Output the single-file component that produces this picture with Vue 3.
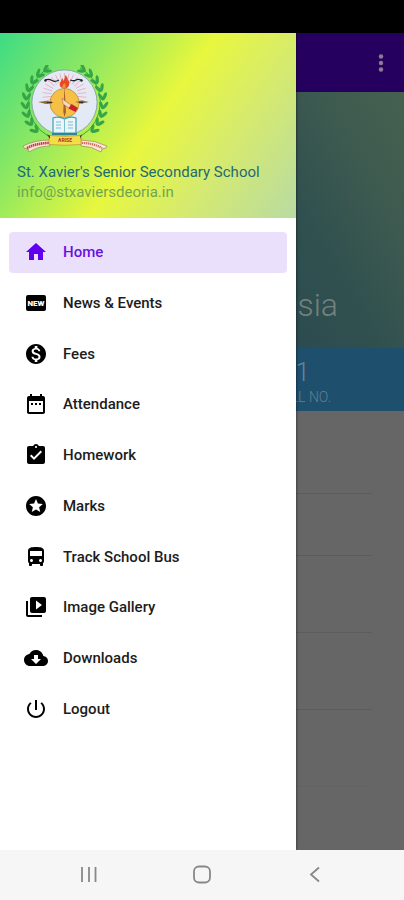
<script setup>
const items = [
  { label: 'Home', active: true, d: 'M10 20v-6h4v6h5v-8h3L12 3 2 12h3v8z' },
  { label: 'News & Events', badge: 'NEW' },
  { label: 'Fees', d: 'M12 2C6.48 2 2 6.48 2 12s4.48 10 10 10 10-4.48 10-10S17.52 2 12 2zm1.41 16.09V20h-2.67v-1.93c-1.71-.36-3.16-1.46-3.27-3.4h1.96c.1 1.05.82 1.87 2.65 1.87 1.96 0 2.4-.98 2.4-1.59 0-.83-.44-1.61-2.67-2.14-2.48-.6-4.18-1.62-4.18-3.67 0-1.72 1.39-2.84 3.11-3.21V4h2.67v1.95c1.86.45 2.79 1.86 2.85 3.39H14.3c-.05-1.11-.64-1.87-2.22-1.87-1.5 0-2.4.68-2.4 1.64 0 .84.65 1.39 2.67 1.91s4.18 1.39 4.18 3.91c-.01 1.83-1.38 2.83-3.12 3.16z' },
  { label: 'Attendance', d: 'M9 11H7v2h2v-2zm4 0h-2v2h2v-2zm4 0h-2v2h2v-2zm2-7h-1V2h-2v2H8V2H6v2H5c-1.11 0-1.99.9-1.99 2L3 20c0 1.1.89 2 2 2h14c1.1 0 2-.9 2-2V6c0-1.1-.9-2-2-2zm0 16H5V9h14v11z' },
  { label: 'Homework', d: 'M19 3h-4.18C14.4 1.84 13.3 1 12 1c-1.3 0-2.4.84-2.82 2H5c-1.1 0-2 .9-2 2v14c0 1.1.9 2 2 2h14c1.1 0 2-.9 2-2V5c0-1.1-.9-2-2-2zm-7 0c.55 0 1 .45 1 1s-.45 1-1 1-1-.45-1-1 .45-1 1-1zm-2 14l-4-4 1.41-1.41L10 14.17l6.59-6.59L18 9l-8 8z' },
  { label: 'Marks', d: 'M11.99 2C6.47 2 2 6.48 2 12s4.47 10 9.99 10C17.52 22 22 17.52 22 12S17.52 2 11.99 2zm4.24 16L12 15.45 7.77 18l1.12-4.81-3.73-3.23 4.92-.42L12 5l1.92 4.53 4.92.42-3.73 3.23L16.23 18z' },
  { label: 'Track School Bus', d: 'M4 16c0 .88.39 1.67 1 2.22V20c0 .55.45 1 1 1h1c.55 0 1-.45 1-1v-1h8v1c0 .55.45 1 1 1h1c.55 0 1-.45 1-1v-1.78c.61-.55 1-1.34 1-2.22V6c0-3.5-3.58-4-8-4s-8 .5-8 4v10zm3.5 1c-.83 0-1.5-.67-1.5-1.5S6.67 14 7.5 14s1.5.67 1.5 1.5S8.33 17 7.5 17zm9 0c-.83 0-1.5-.67-1.5-1.5s.67-1.5 1.5-1.5 1.5.67 1.5 1.5-.67 1.5-1.5 1.5zm1.5-6H6V6h12v5z' },
  { label: 'Image Gallery', d: 'M4 6H2v14c0 1.1.9 2 2 2h14v-2H4V6zm16-4H8c-1.1 0-2 .9-2 2v12c0 1.1.9 2 2 2h12c1.1 0 2-.9 2-2V4c0-1.1-.9-2-2-2zm-8 12.5v-9l6 4.5-6 4.5z' },
  { label: 'Downloads', d: 'M19.35 10.04C18.67 6.59 15.64 4 12 4 9.11 4 6.6 5.64 5.35 8.04 2.34 8.36 0 10.91 0 14c0 3.31 2.69 6 6 6h13c2.76 0 5-2.24 5-5 0-2.64-2.05-4.78-4.65-4.96zM17 13l-5 5-5-5h3V9h4v4h3z' },
  { label: 'Logout', d: 'M13 3h-2v10h2V3zm4.83 2.17l-1.42 1.42C17.99 7.86 19 9.81 19 12c0 3.87-3.13 7-7 7s-7-3.13-7-7c0-2.19 1.01-4.14 2.58-5.42L6.17 5.17C4.23 6.82 3 9.26 3 12c0 4.97 4.03 9 9 9s9-4.03 9-9c0-2.74-1.23-5.18-3.17-6.83z' }
]

// Laurel leaves, in pairs along each side of the crest (degrees clockwise from the top)
const leaves = []
for (let a = 27; a <= 131; a += 13) {
  for (const side of [-1, 1]) {
    for (const [r, tilt] of [[41, 32], [37, -24]]) {
      const t = (a * Math.PI) / 180
      leaves.push({
        x: 49.5 + side * Math.sin(t) * r,
        y: 44 - Math.cos(t) * r,
        rot: side * (a + 90 + tilt)
      })
    }
  }
}

// Rays of the torch flame
const rays = Array.from({ length: 19 }, (_, i) => -108 + i * 12)
</script>

<template>
  <div class="screen">
    <div class="status-bar"></div>

    <div class="body">
      <aside class="drawer">
        <header class="profile">
          <svg class="crest" viewBox="2 5 98 90" role="img" aria-label="School crest">
            <path d="M33 76A39 39 0 0 1 34 8M66 76A39 39 0 0 0 65 8" fill="none" stroke="#39a845" stroke-width="1" />
            <ellipse
              v-for="(l, i) in leaves"
              :key="i"
              rx="1.6"
              ry="4.2"
              fill="#35a548"
              :transform="`translate(${l.x} ${l.y}) rotate(${l.rot})`"
            />
            <circle cx="49.5" cy="42.5" r="32.6" fill="#e3eaf6" stroke="#7d9a9a" stroke-width=".8" />
            <g stroke="#eba9b4" stroke-width=".8">
              <path v-for="r in rays" :key="r" d="M0 -13V-22" :transform="`translate(49.5 35) rotate(${r})`" />
            </g>
            <circle cx="49.5" cy="43" r="14.6" fill="#f6bf45" stroke="#a98738" stroke-width=".7" />
            <path d="M30 20q4-1.500 7 .5t7-.5M55 20q4 1.500 6 0t6 .5" fill="none" stroke="#24242c" stroke-width="1.300" />
            <circle cx="30.500" cy="20.500" r="1.200" fill="#24242c" />
            <circle cx="66.500" cy="20.500" r="1.200" fill="#24242c" />
            <path d="M23 42l8-1 8 1.500-8 1.500zM60 42l7-1.500 7 1.500-7 1.500z" fill="#8a6a3a" />
            <path d="M32 42.500h5M64 42.500h4" stroke="#3b2a1e" stroke-width="1.500" />
            <path d="M49.500 26l1.500 26-1.500 5-1.200-5z" fill="#a3632b" />
            <path d="M45 26c-1-4 2-5 2-8 1 1 1.500 2 1.500 3 1-2 2-4 1.500-6 3 2 3 5 3 6l1-1c1 3 0 6-1 7-1 2-7 2-8-1z" fill="#e64a25" />
            <path d="M47.500 28c-1-2 1-4 2-5 1 2 2 3 1 5z" fill="#f28b31" />
            <path d="M47 38l3 3 6 4-2 3-6-4z" fill="#f7d9c5" stroke="#a85f43" stroke-width=".5" />
            <path d="M56.500 44l6.500 4-2.500 4-7-3.500z" fill="#c9202b" />
            <path d="M38 58q6-2 11.500 1Q55 56 61 58v15H38z" fill="#eaf6f9" stroke="#3c9fb0" stroke-width="1.200" />
            <path d="M49.500 59v14M41 62h5M41 65h5M41 68h5M53 62h5M53 65h5M53 68h5" stroke="#6fb7c8" stroke-width=".9" />
            <path d="M37 74h25" stroke="#318595" stroke-width="2" />
            <path d="M8 86q12-6 27-6v6q-12 0-21 6l-1-3-4-1z" fill="#f8ead6" stroke="#a08355" stroke-width=".7" />
            <path d="M92 86q-12-6-26-6v6q11 0 20 6l1-3 4-1z" fill="#f8ead6" stroke="#a08355" stroke-width=".7" />
            <path d="M12 88q10-5 22-5" fill="none" stroke="#cc3640" stroke-width="2.600" stroke-dasharray="1.500 .6" />
            <path d="M67 83q11 0 20 5" fill="none" stroke="#cf6a62" stroke-width="2.200" stroke-dasharray="1.300 .7" />
            <path d="M34 75.500q16 1.500 32 0v9q-16 1.500-32 0z" fill="#f5dc49" stroke="#a98b25" stroke-width=".6" />
            <path d="M32 74l3 2v3zM67 74l-2 2v3z" fill="#40311f" />
            <text x="50" y="82" class="crest-text">ARISE</text>
          </svg>
          <div class="school">St. Xavier's Senior Secondary School</div>
          <div class="email">info@stxaviersdeoria.in</div>
        </header>

        <nav class="menu" aria-label="Main">
          <a
            v-for="item in items"
            :key="item.label"
            href="#"
            class="menu-item"
            :class="{ active: item.active }"
          >
            <svg class="icon" viewBox="0 0 24 24" aria-hidden="true">
              <path v-if="item.d" :d="item.d" />
              <template v-else>
                <rect x="2" y="4" width="20" height="16" rx="2" />
                <text x="12" y="15" class="badge-text">{{ item.badge }}</text>
              </template>
            </svg>
            <span>{{ item.label }}</span>
          </a>
        </nav>
      </aside>

      <main class="page">
        <div class="app-bar">
          <button class="more" aria-label="More options">
            <svg viewBox="0 0 24 24" aria-hidden="true">
              <circle cx="12" cy="5.500" r="2.200" />
              <circle cx="12" cy="12" r="2.200" />
              <circle cx="12" cy="18.500" r="2.200" />
            </svg>
          </button>
        </div>
        <div class="hero">sia</div>
        <div class="roll">
          <span class="roll-value">1</span>
          <span class="roll-label">LL NO.</span>
        </div>
        <div class="rows">
          <div class="row first"></div>
          <div class="row second"></div>
          <div class="row"></div>
          <div class="row"></div>
          <div class="row faint"></div>
        </div>
      </main>
    </div>

    <footer class="system-nav">
      <button aria-label="Recent apps">
        <svg viewBox="0 0 24 24" aria-hidden="true"><path d="M5 4v15M12 4v15M18.500 4v15" /></svg>
      </button>
      <button aria-label="Home screen">
        <svg viewBox="0 0 24 24" aria-hidden="true"><rect x="4" y="3.500" width="16" height="16" rx="5" /></svg>
      </button>
      <button aria-label="Back">
        <svg viewBox="0 0 24 24" aria-hidden="true"><path d="M16 4.500l-8 7 8 7" /></svg>
      </button>
    </footer>
  </div>
</template>

<style>
body {
  margin: 0;
  background: #666;
}
</style>

<style scoped>
.screen {
  display: flex;
  flex-direction: column;
  min-height: 100vh;
  font-family: Roboto, "Liberation Sans", sans-serif;
  background: #666;
}

.status-bar {
  height: 33px;
  background: #000;
}

.body {
  display: flex;
  flex: 1;
  overflow: hidden;
}

.drawer {
  position: relative;
  z-index: 1;
  width: calc(100% - 108px);
  background: #fff;
  box-shadow: 0 0 3px #000a;
}

.profile {
  display: flex;
  flex-direction: column;
  padding: 32px 16px 16px 17px;
  font-size: 15px;
  line-height: 20px;
  white-space: nowrap;
  background: linear-gradient(125deg, #3cdb85 0%, #93e95f 27%, #e8f73e 51%, #d5ea70 73%, #b8dba2 100%);
}

.crest {
  width: 98px;
  height: 90px;
  margin-bottom: 7px;
}

.crest-text {
  font: 700 5px Roboto, sans-serif;
  fill: #b52a25;
  text-anchor: middle;
}

.school {
  color: #1f6b72;
}

.email {
  color: #6fa552;
}

.menu {
  display: grid;
  grid-template-rows: repeat(10, 1fr);
  align-items: center;
  height: 507px;
  padding: 9px 9px 0;
}

.menu-item {
  display: flex;
  align-items: center;
  gap: 15px;
  height: 41px;
  padding: 0 15px;
  border-radius: 4px;
  font-size: 15px;
  font-weight: 500;
  line-height: 20px;
  color: #1c1c1c;
  text-decoration: none;
}

.menu-item.active {
  color: #6a10e0;
  background: #eae0fb;
}

.icon {
  width: 24px;
  height: 24px;
  fill: #000;
}

.active .icon {
  fill: #6000ee;
}

.badge-text {
  font: 900 8px Roboto, sans-serif;
  fill: #fff;
  text-anchor: middle;
}

.page {
  flex: 1;
  min-width: 0;
  overflow: hidden;
}

.app-bar {
  display: flex;
  align-items: center;
  justify-content: flex-end;
  height: 59px;
  padding-right: 11px;
  background: #26005f;
}

.more {
  display: flex;
  padding: 0;
  border: 0;
  background: none;
}

.more svg {
  width: 24px;
  height: 24px;
  fill: #8b7a93;
}

.hero {
  display: flex;
  align-items: flex-end;
  justify-content: flex-end;
  box-sizing: border-box;
  height: 256px;
  padding: 0 66px 24px 0;
  font-size: 32px;
  font-weight: 300;
  line-height: 38px;
  color: #74817d;
  background: linear-gradient(60deg, #2b4b50 0%, #31514f 35%, #3d5a50 65%, #46614f 100%);
}

.roll {
  display: flex;
  flex-direction: column;
  align-items: flex-end;
  box-sizing: border-box;
  height: 63px;
  padding: 9px 73px 0 0;
  font-weight: 300;
  background: #1e4f6d;
}

.roll-value {
  padding-right: 21px;
  font-size: 26px;
  line-height: 30px;
  color: #6a8293;
}

.roll-label {
  font-size: 14px;
  line-height: 20px;
  white-space: nowrap;
  color: #64808f;
}

.rows {
  padding-right: 32px;
}

.row {
  box-sizing: border-box;
  height: 77px;
  border-bottom: 1px solid #5c5c5c;
}

.row.first {
  height: 83px;
}

.row.second {
  height: 62px;
}

.row.faint {
  border-color: #636363;
}

.system-nav {
  display: grid;
  grid-template-columns: repeat(3, 1fr);
  align-items: center;
  height: 50px;
  padding: 0 32px;
  background: #f6f6f6;
}

.system-nav button {
  display: flex;
  justify-content: center;
  padding: 0;
  border: 0;
  background: none;
}

.system-nav svg {
  width: 24px;
  height: 24px;
  fill: none;
  stroke: #888;
  stroke-width: 1.8;
}
</style>
